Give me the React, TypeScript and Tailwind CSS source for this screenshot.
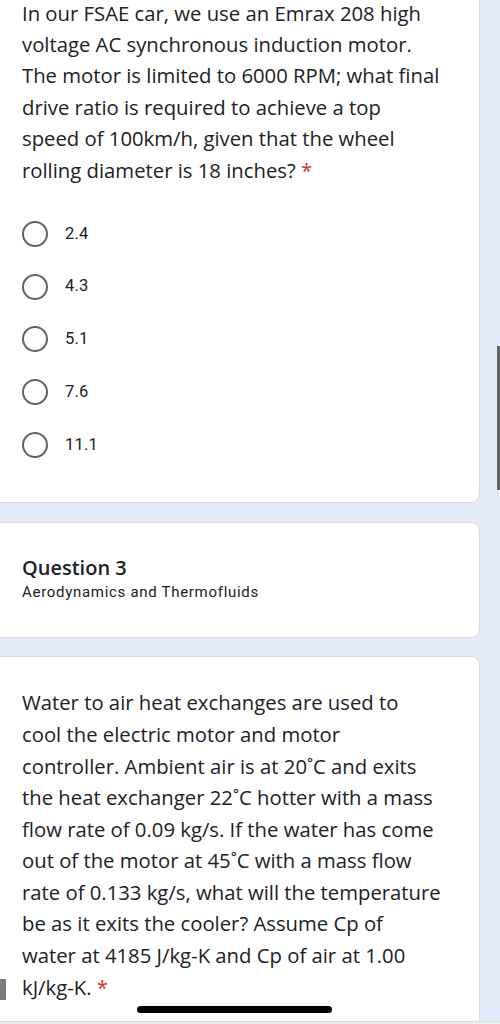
import React from "react";

const sans = { fontFamily: '"Open Sans", "Noto Sans", sans-serif' };

function Radio({ label }: { label: string }) {
  return (
    <div className="flex items-center h-[52.75px]">
      <div className="w-[26px] h-[26px] rounded-full border-[2.5px] border-[#5f6368] ml-[22px]" />
      <span className="ml-[17px] text-[16.5px] text-[#202124] font-['Roboto',sans-serif] tracking-[0.2px]">{label}</span>
    </div>
  );
}

const q1 = [
  "voltage AC synchronous induction motor.",
  "The motor is limited to 6000 RPM; what final",
  "drive ratio is required to achieve a top",
  "speed of 100km/h, given that the wheel",
];

const q3 = [
  "Water to air heat exchanges are used to",
  "cool the electric motor and motor",
  "controller. Ambient air is at 20˚C and exits",
  "the heat exchanger 22˚C hotter with a mass",
  "flow rate of 0.09 kg/s. If the water has come",
  "out of the motor at 45˚C with a mass flow",
  "rate of 0.133 kg/s, what will the temperature",
  "be as it exits the cooler? Assume Cp of",
  "water at 4185 J/kg-K and Cp of air at 1.00",
];

export default function App() {
  return (
    <div className="relative w-[500px] h-[1024px] overflow-hidden bg-[#e3eafa]">
      <div className="flex flex-col">
        <div className="w-[480px] bg-white border-r border-b border-[#dadce0] rounded-br-[9px] pb-[31px]">
          <div className="px-[22px] text-[20.3px] leading-[31.6px] text-[#202124] whitespace-nowrap" style={sans}>
            <div className="leading-[26px] mb-[2.6px]">In our FSAE car, we use an Emrax 208 high</div>
            {q1.map((l) => (
              <div key={l}>{l}</div>
            ))}
            <div>
              rolling diameter is 18 inches? <span className="text-[#d93025]">*</span>
            </div>
          </div>
          <div className="mt-[21px]">
            <Radio label="2.4" />
            <Radio label="4.3" />
            <Radio label="5.1" />
            <Radio label="7.6" />
            <Radio label="11.1" />
          </div>
        </div>
        <div className="mt-[19px] w-[480px] h-[116px] bg-white border-y border-r border-[#dadce0] rounded-r-[9px] px-[22px] pt-[32px]">
          <div className="text-[20px] leading-[26px] font-semibold text-[#202124]" style={sans}>Question 3</div>
          <div className="mt-[1px] text-[15px] leading-[20px] text-[#202124] font-['Roboto',sans-serif] tracking-[0.7px]">Aerodynamics and Thermofluids</div>
        </div>
        <div className="mt-[18px] w-[480px] h-[400px] bg-white border-t border-r border-[#dadce0] rounded-tr-[9px] pt-[30px]">
          <div className="px-[22px] text-[20.3px] leading-[31.6px] text-[#202124] whitespace-nowrap" style={sans}>
            {q3.map((l) => (
              <div key={l}>{l}</div>
            ))}
            <div>
              kJ/kg-K. <span className="text-[#d93025]">*</span>
            </div>
          </div>
        </div>
      </div>
      <div className="absolute right-0 top-[346px] w-[3px] h-[144px] bg-[#5f6368]" />
      <div className="absolute left-0 top-[979px] w-[6px] h-[21px] bg-[#7a7a7a] rounded-r-[1px]" />
      <div className="absolute left-[137px] top-[1006px] w-[195px] h-[7px] rounded-full bg-black" />
      <div className="absolute left-0 bottom-0 w-full h-[3px] bg-[#eeeeee] border-t border-[#dcdcdc]" />
    </div>
  );
}
